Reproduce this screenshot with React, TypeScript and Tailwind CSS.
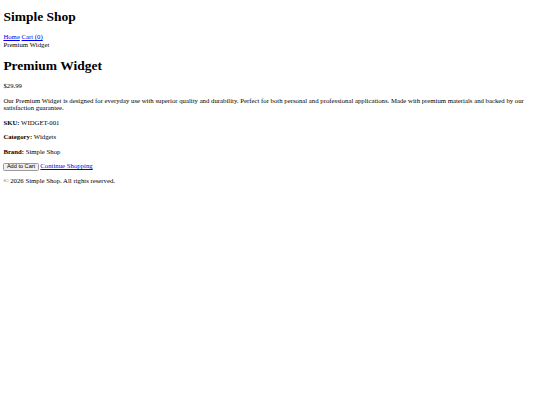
export default function App() {
  const serif = { fontFamily: '"Liberation Serif", "Times New Roman", serif' };
  return (
    <div className="flow-root min-h-[405px] bg-white text-[6.75px] leading-[1.15] text-black" style={serif}>
      <div className="mx-[3.375px] my-[3.375px]">
        <header>
          <h1 className="mb-[8.5px] mt-[9.05px] text-[13.5px] font-bold leading-[1.15]">Simple Shop</h1>
          <nav>
            <a href="#" className="text-[#0000ee] underline">Home</a>{' '}
            <a href="#" className="text-[#0000ee] underline">Cart (0)</a>
          </nav>
          <div>Premium Widget</div>
        </header>

        <main>
          <h1 className="my-[9.05px] text-[13.5px] font-bold leading-[1.15]">Premium Widget</h1>
          <p className="my-[6.75px]">$29.99</p>
          <p className="my-[6.75px]">
            Our Premium Widget is designed for everyday use with superior quality and durability. Perfect for both
            personal and professional applications. Made with premium materials and backed by our satisfaction
            guarantee.
          </p>
          <p className="my-[6.75px]"><strong>SKU:</strong> WIDGET-001</p>
          <p className="my-[6.75px]"><strong>Category:</strong> Widgets</p>
          <p className="my-[6.75px]"><strong>Brand:</strong> Simple Shop</p>
          <div className="my-[6.75px] h-[7.8px]">
            <button
              className="rounded-[1.5px] border-[0.7px] border-[#9a9a9a] bg-[#f0f0f0] px-[2.5px] py-[0.3px] text-[5.6px] leading-none text-black"
              style={{ fontFamily: '"Liberation Sans", Arial, sans-serif' }}
            >
              Add to Cart
            </button>{' '}
            <a href="#" className="text-[#0000ee] underline">Continue Shopping</a>
          </div>
        </main>

        <footer>
          <p className="my-[6.75px]">© 2026 Simple Shop. All rights reserved.</p>
        </footer>
      </div>
    </div>
  );
}
